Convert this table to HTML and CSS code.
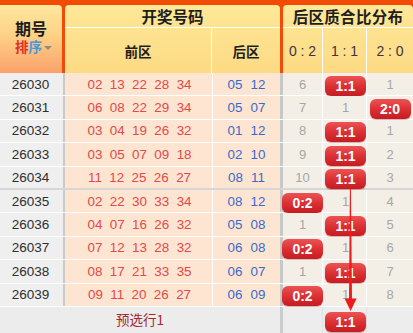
FILE: index.html
```html
<!DOCTYPE html>
<html lang="zh">
<head>
<meta charset="utf-8">
<title>后区质合比分布</title>
<link rel="stylesheet" href="styles.css">
</head>
<body>
<div class="board">
  <div class="head">
    <div class="h-id">
      <div class="h-id-title">期号</div>
      <div class="sort"><span class="s1">排</span><span class="s2">序</span><span class="tri"></span></div>
    </div>
    <div class="h-draw">
      <div class="h-title">开奖号码</div>
      <div class="h-sub">
        <div class="h-front">前区</div>
        <div class="h-back">后区</div>
      </div>
    </div>
    <div class="h-dist">
      <div class="h-title">后区质合比分布</div>
      <div class="h-sub">
        <div class="hr hr0">0 : 2</div>
        <div class="hr hr1">1 : 1</div>
        <div class="hr hr2">2 : 0</div>
      </div>
    </div>
  </div>

  <div class="body">
    <div class="row">
      <div class="c-id">26030</div>
      <div class="c-front"><span>02</span><span>13</span><span>22</span><span>28</span><span>34</span></div>
      <div class="c-back"><span>05</span><span>12</span></div>
      <div class="c-r c-r0">6</div><div class="c-r c-r1"><b class="badge">1:1</b></div><div class="c-r c-r2">1</div>
    </div>
    <div class="row">
      <div class="c-id">26031</div>
      <div class="c-front"><span>06</span><span>08</span><span>22</span><span>29</span><span>34</span></div>
      <div class="c-back"><span>05</span><span>07</span></div>
      <div class="c-r c-r0">7</div><div class="c-r c-r1">1</div><div class="c-r c-r2"><b class="badge">2:0</b></div>
    </div>
    <div class="row">
      <div class="c-id">26032</div>
      <div class="c-front"><span>03</span><span>04</span><span>19</span><span>26</span><span>32</span></div>
      <div class="c-back"><span>01</span><span>12</span></div>
      <div class="c-r c-r0">8</div><div class="c-r c-r1"><b class="badge">1:1</b></div><div class="c-r c-r2">1</div>
    </div>
    <div class="row">
      <div class="c-id">26033</div>
      <div class="c-front"><span>03</span><span>05</span><span>07</span><span>09</span><span>18</span></div>
      <div class="c-back"><span>02</span><span>10</span></div>
      <div class="c-r c-r0">9</div><div class="c-r c-r1"><b class="badge">1:1</b></div><div class="c-r c-r2">2</div>
    </div>
    <div class="row group-end">
      <div class="c-id">26034</div>
      <div class="c-front"><span>11</span><span>12</span><span>25</span><span>26</span><span>27</span></div>
      <div class="c-back"><span>08</span><span>11</span></div>
      <div class="c-r c-r0">10</div><div class="c-r c-r1"><b class="badge">1:1</b></div><div class="c-r c-r2">3</div>
    </div>
    <div class="row">
      <div class="c-id">26035</div>
      <div class="c-front"><span>02</span><span>22</span><span>30</span><span>33</span><span>34</span></div>
      <div class="c-back"><span>08</span><span>12</span></div>
      <div class="c-r c-r0"><b class="badge">0:2</b></div><div class="c-r c-r1">1</div><div class="c-r c-r2">4</div>
    </div>
    <div class="row">
      <div class="c-id">26036</div>
      <div class="c-front"><span>04</span><span>07</span><span>16</span><span>26</span><span>32</span></div>
      <div class="c-back"><span>05</span><span>08</span></div>
      <div class="c-r c-r0">1</div><div class="c-r c-r1"><b class="badge">1:1</b></div><div class="c-r c-r2">5</div>
    </div>
    <div class="row">
      <div class="c-id">26037</div>
      <div class="c-front"><span>07</span><span>12</span><span>13</span><span>28</span><span>32</span></div>
      <div class="c-back"><span>06</span><span>08</span></div>
      <div class="c-r c-r0"><b class="badge">0:2</b></div><div class="c-r c-r1">1</div><div class="c-r c-r2">6</div>
    </div>
    <div class="row">
      <div class="c-id">26038</div>
      <div class="c-front"><span>08</span><span>17</span><span>21</span><span>33</span><span>35</span></div>
      <div class="c-back"><span>06</span><span>07</span></div>
      <div class="c-r c-r0">1</div><div class="c-r c-r1"><b class="badge">1:1</b></div><div class="c-r c-r2">7</div>
    </div>
    <div class="row">
      <div class="c-id">26039</div>
      <div class="c-front"><span>09</span><span>11</span><span>20</span><span>26</span><span>27</span></div>
      <div class="c-back"><span>06</span><span>09</span></div>
      <div class="c-r c-r0"><b class="badge">0:2</b></div><div class="c-r c-r1">1</div><div class="c-r c-r2">8</div>
    </div>
    <div class="foot">
      <div class="f-main">预选行1</div>
      <div class="f-r f-r0"></div><div class="f-r f-r1"><b class="badge">1:1</b></div><div class="f-r f-r2"></div>
    </div>

    <svg class="arrow" width="413" height="150" viewBox="0 185 413 150" aria-hidden="true">
      <path d="M349.9 188 L350.9 188 L352 300 L349 300 Z" fill="#ef1a1a"/>
      <path d="M344.6 298.5 L356.6 298.5 L350.6 311 Z" fill="#ef1a1a"/>
    </svg>
  </div>
</div>
</body>
</html>
```

FILE: styles.css
```css
* { box-sizing: border-box; }

html, body {
  margin: 0;
  padding: 0;
  background: #ffffff;
}

body {
  font-family: "Liberation Sans", "Noto Sans CJK SC", sans-serif;
  color: #333;
}

.board {
  width: 413px;
  height: 333px;
  overflow: hidden;
  position: relative;
}

/* ---------- header ---------- */
.head {
  display: flex;
  height: 73px;
  padding-top: 5px;
  background: #f24b06;
}

.h-id {
  width: 62px;
  border-top-right-radius: 4px;
  background: linear-gradient(#fee89d 0%, #fdd186 45%, #fba16a 100%);
  display: flex;
  flex-direction: column;
  align-items: center;
  padding-top: 15px;
}

.h-id-title {
  font-family: "Liberation Sans", "Noto Sans CJK SC", sans-serif;
  font-weight: bold;
  font-size: 16px;
  line-height: 19px;
  height: 19px;
  color: #1c1c1c;
}

.sort {
  display: flex;
  align-items: center;
  height: 16px;
  margin-top: 1px;
  padding-left: 5px;
  font-family: "Liberation Sans", "Noto Sans CJK SC", sans-serif;
  font-weight: bold;
  font-size: 13.5px;
  line-height: 16px;
}

.s1 { color: #e0302c; }
.s2 { color: #3c9be6; }

.tri {
  width: 0;
  height: 0;
  margin-left: 2px;
  border-left: 4px solid transparent;
  border-right: 4px solid transparent;
  border-top: 4px solid #8b8b8b;
}

.h-draw,
.h-dist {
  margin-left: 3px;
  border-top-left-radius: 4px;
  border-top-right-radius: 4px;
  background: linear-gradient(#fee897, #fdda84);
  display: flex;
  flex-direction: column;
}

.h-draw { width: 215px; }
.h-dist { width: 130px; }

.h-title {
  height: 23px;
  border-bottom: 1px solid #fff;
  display: flex;
  align-items: center;
  justify-content: center;
  font-family: "Noto Sans CJK SC", sans-serif;
  font-weight: bold;
  font-size: 15.5px;
  color: #1e1e1e;
}

.h-dist .h-title {
  letter-spacing: 0.3px;
}

.h-sub {
  flex: 1;
  display: flex;
}

.h-front,
.h-back {
  display: flex;
  align-items: center;
  justify-content: center;
  font-family: "Noto Sans CJK SC", sans-serif;
  font-weight: bold;
  font-size: 13.5px;
  color: #1e1e1e;
}

.h-front {
  width: 147px;
  border-right: 1px solid #fff;
}

.h-back { flex: 1; }

.hr {
  display: flex;
  align-items: center;
  justify-content: center;
  font-size: 14px;
  color: #3d3347;
  white-space: pre;
}

.hr0 { width: 40px; border-right: 1px solid #fff; }
.hr1 { width: 44px; border-right: 1px solid #fff; }
.hr2 { width: 46px; }

/* ---------- body ---------- */
.body {
  position: relative;
}

.row {
  display: flex;
  height: 23.4px;
  border-bottom: 1px solid #fff;
}

.row.group-end {
  border-bottom: 2px solid #d6d6d6;
}

.row > div {
  display: flex;
  align-items: center;
  justify-content: center;
}

.c-id {
  width: 65px;
  background: #efeff0;
  border-right: 2px solid #c9c9c9;
  font-size: 13.5px;
  color: #2e2e2e;
  padding-right: 2px;
}

.c-front {
  width: 148px;
  background: #fee5d1;
  border-right: 1px solid #fff;
  gap: 7.4px;
  font-size: 13.4px;
  color: #e4484a;
  padding-left: 2px;
}

.c-back {
  width: 67px;
  background: #fee5d1;
  gap: 8px;
  font-size: 13.4px;
  color: #3a69cc;
}

.c-r {
  background: #f4efe6;
  font-size: 13px;
  color: #a6a6a6;
}

.c-r0 { width: 43px; border-left: 3px solid #c8c8c8; border-right: 1px solid #fff; }
.c-r1 { width: 44px; border-right: 1px solid #fff; padding-left: 2px; }
.c-r2 { width: 46px; }

.badge {
  flex-shrink: 0;
  display: block;
  width: 41px;
  height: 20px;
  margin-top: 3px;
  border-radius: 6px;
  background: linear-gradient(#ec5353 0%, #dc3134 50%, #c51c21 100%);
  box-shadow: 0 1px 1px rgba(120, 0, 0, 0.3);
  color: #fff;
  font-weight: bold;
  font-size: 14px;
  line-height: 20px;
  text-align: center;
}

/* ---------- footer ---------- */
.foot {
  display: flex;
  height: 26px;
  background: #ececec;
}

.foot > div {
  display: flex;
  align-items: center;
  justify-content: center;
}

.f-main {
  width: 280px;
  font-family: "Noto Sans CJK SC", sans-serif;
  font-size: 13.5px;
  color: #a1282c;
  padding-bottom: 1px;
}

.f-r { background: #ededed; }
.f-r0 { width: 43px; border-left: 3px solid #cdcdcd; border-right: 1px solid #e2e2e2; }
.f-r1 { width: 44px; border-right: 1px solid #e2e2e2; padding-left: 2px; }
.f-r2 { width: 46px; }

.f-r1 .badge { margin-top: 4px; }

.arrow {
  position: absolute;
  left: 0;
  top: 112px;
  pointer-events: none;
}
```
